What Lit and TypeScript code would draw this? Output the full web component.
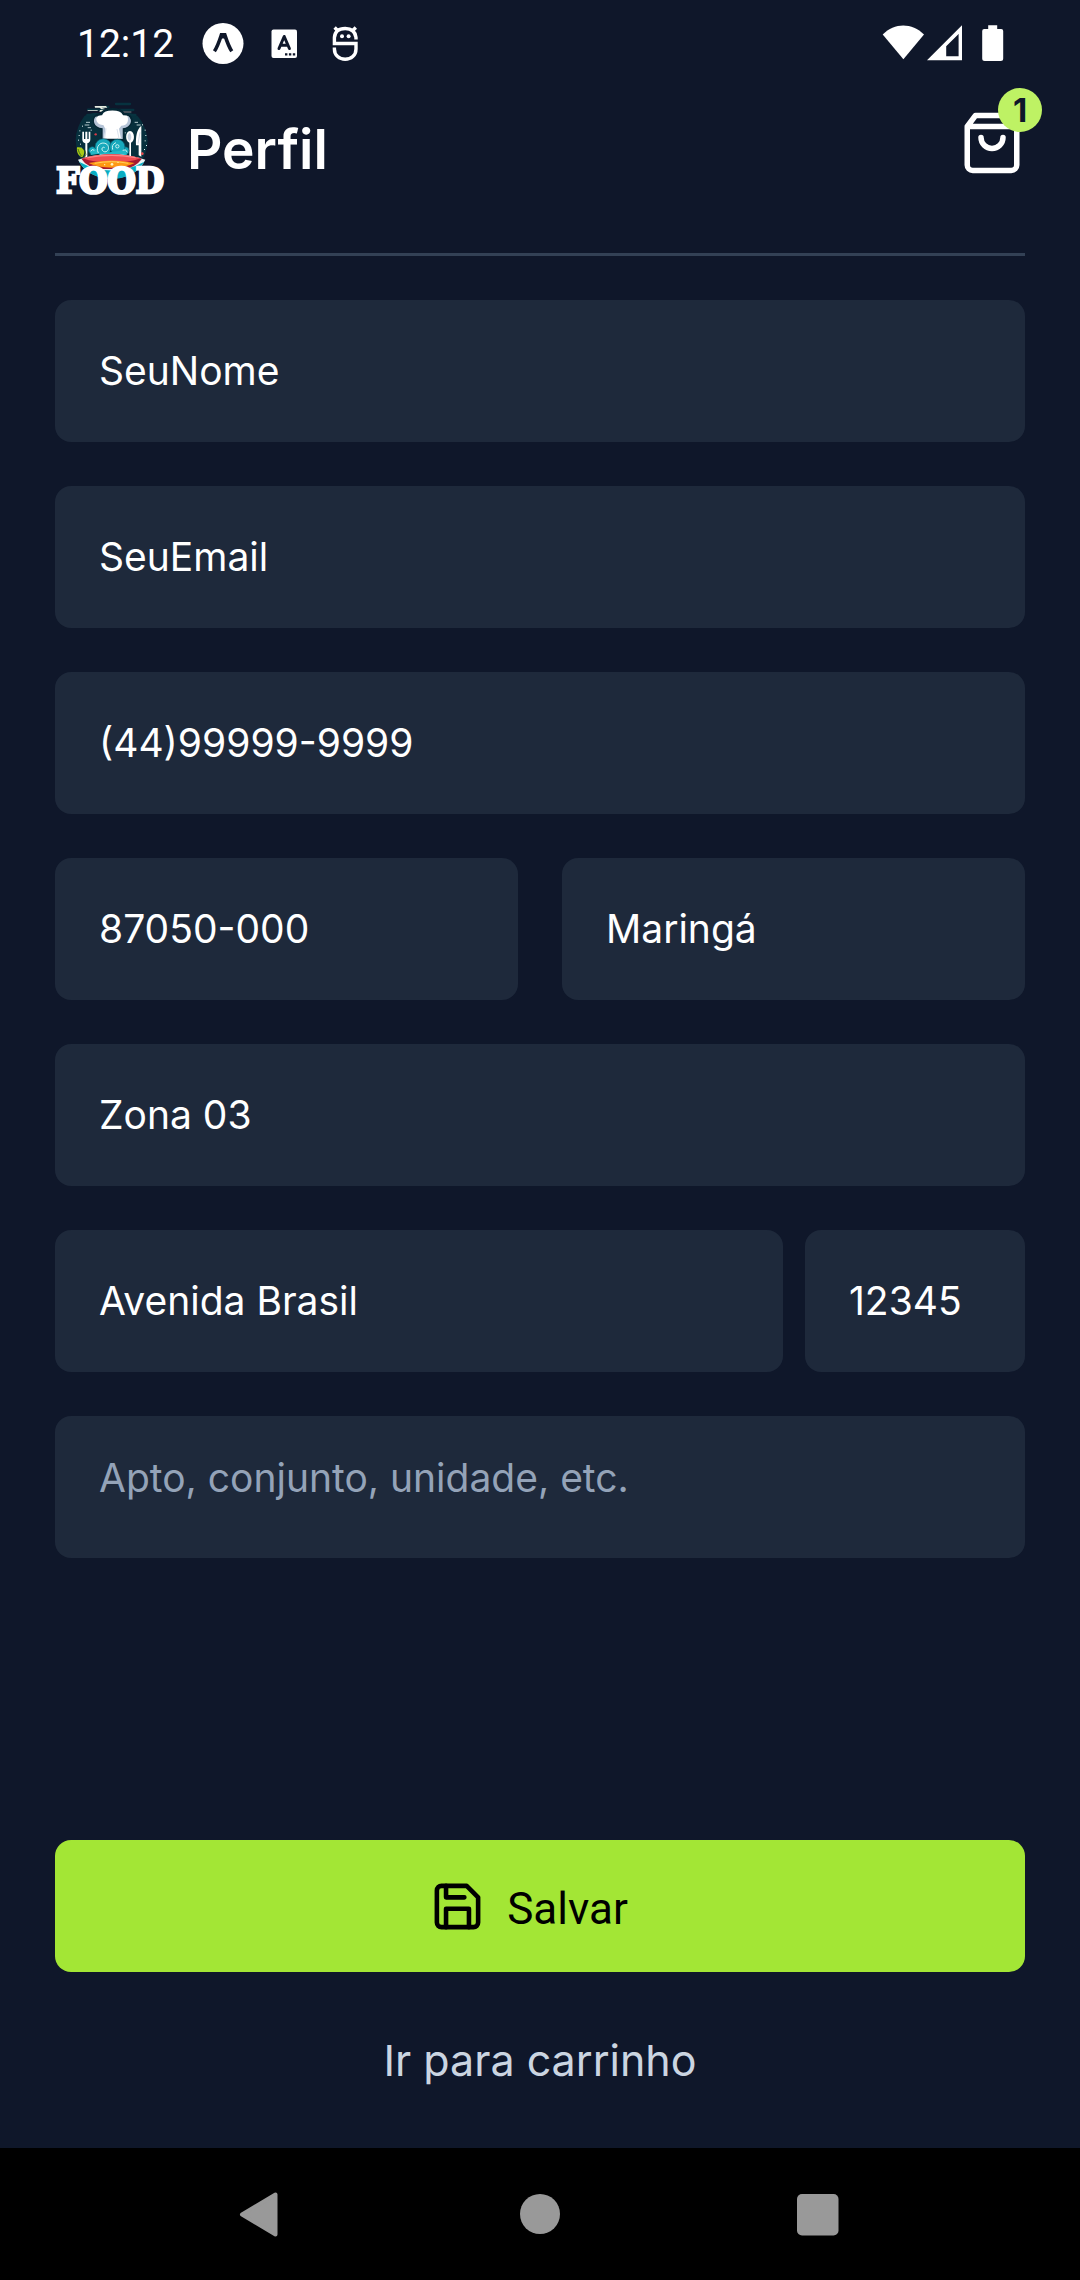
import { LitElement, html, css, svg } from "lit";
import { customElement } from "lit/decorators.js";

const base = css`
  * { box-sizing: border-box; }
  svg { display: block; }
`;

@customElement("status-bar")
class StatusBar extends LitElement {
  static styles = [base, css`
    :host { display: flex; align-items: center; justify-content: space-between; height: 88px; padding: 0 76px 0 77px; color: #fff; }
    .side { display: flex; align-items: center; }
    .time { font: 400 39px/44px Roboto, sans-serif; margin-right: 27px; }
    .apps { gap: 20px; }
  `];
  render() {
    return html`
      <div class="side apps">
        <div class="side">
          <span class="time">12:12</span>
          <svg width="44" height="44" viewBox="0 0 44 44" aria-hidden="true">
            <circle cx="22" cy="21.500" r="20.500" fill="#fff"/>
            <path d="M13.400 29.200C16.500 25 18.400 19 20.400 12.900H23.800C25.800 19 27.800 25 30.800 29.200" fill="none" stroke="#0f172a" stroke-width="3.600"/>
            <path d="M20.200 11.400h3.800l1 5h-5.800z" fill="#0f172a"/>
          </svg>
        </div>
        <svg width="38" height="44" viewBox="0 0 38 44" aria-hidden="true">
          <rect x="6.500" y="7.500" width="25.500" height="28.500" rx="2" fill="#fff"/>
          <path d="M14 26.500L19.200 14.500L24.400 26.500M15.800 23.300H22.600" fill="none" stroke="#0f172a" stroke-width="3" stroke-linecap="round" stroke-linejoin="round"/>
          <path d="M20 31.200h2.400v2.400H20zM23.900 31.200h2.400v2.400h-2.400zM27.800 31.200h2.400v2.400h-2.400z" fill="#0f172a"/>
        </svg>
        <svg width="44" height="44" viewBox="0 0 44 44" aria-hidden="true">
          <path d="M33 17.500V15.500C32 8 27 6.500 22.200 6.500S12 8 11.400 15.500V21.500H33V27C33 33.500 28 37.300 22.200 37.300S11.400 33.500 11.400 27V25.500" fill="none" stroke="#fff" stroke-width="3.400"/>
          <path d="M11.600 5.500l4 4M32.800 5.500l-4 4" stroke="#fff" stroke-width="3.400"/>
          <circle cx="19" cy="14.300" r="2" fill="#fff"/>
          <circle cx="25.600" cy="14.300" r="2" fill="#fff"/>
        </svg>
      </div>
      <svg width="124" height="44" viewBox="0 0 124 44" aria-hidden="true" fill="#fff">
        <path d="M2.700 12.600C14.500 0.500 32 0.500 44 12.600L23.400 37.300Z"/>
        <path fill-rule="evenodd" d="M47 38.300L82 3.200V38.300ZM66.200 34.200H78.600V12L66.200 24.300Z"/>
        <path d="M108.200 3.300h9v3.800h4a2 2 0 0 1 2 2v27.500a2.500 2.500 0 0 1-2.500 2.500h-16a2.500 2.500 0 0 1-2.500-2.500V9.100a2 2 0 0 1 2-2h4z"/>
      </svg>
    `;
  }
}

@customElement("food-logo")
class FoodLogo extends LitElement {
  static styles = [base, css`
    :host { display: block; }
    svg { overflow: visible; }
    .word { font: 700 108px "DejaVu Serif Condensed", "DejaVu Serif", serif; fill: #fff; stroke: #fff; stroke-width: 8px; stroke-linejoin: miter; }
  `];
  render() {
    const dots = [[88, 106], [96, 92], [86, 120], [84, 134], [90, 146], [276, 88], [284, 104], [286, 120], [284, 136], [288, 150], [92, 158], [282, 162], [122, 104], [224, 112], [228, 160]];
    return html`
      <svg width="110" height="95" viewBox="15 21 330 285" role="img" aria-label="Food">
        <path d="M104 62Q78 96 77 134Q78 190 112 220H260Q292 184 293 136Q288 90 262 62L240 54H130Z" fill="#07303d"/>
        <g fill="none" stroke="#07323f" stroke-width="7" stroke-linecap="round">
          <path d="M198 27H240M114 44H160M150 36H175M208 45H250M112 60H256"/>
        </g>
        <path d="M134 33h34l4 5h-18l14 5h-14l-5-5h-14zM113 46h30v2h-30zM218 50h26v2h-26zM150 45h10l4 5h-16z" fill="#e9eee3"/>
        <g fill="#e8f4f5">${dots.map(([x, y]) => svg`<rect x=${x} y=${y} width="3" height="3"/>`)}</g>
        <path d="M108 82h12M104 90h14M113 98h10M254 82h10M260 90h12" stroke="#d7e8ea" stroke-width="2.500" fill="none"/>

        <path d="M158 101C124 96 124 57 154 57C161 39 211 37 221 57C251 57 254 93 220 101V135H155Z" fill="#fff" stroke="#052633" stroke-width="7"/>
        <path d="M158 100C130 98 125 72 140 63C135 78 145 91 160 90L166 101L162 132H158ZM213 132L207 101L214 92C230 92 238 80 232 62C251 72 244 97 218 100V132Z" fill="#b5c4d7"/>
        <path d="M168 100L164 130M201 102L207 130" stroke="#dbe3ed" stroke-width="3"/>

        <path d="M97 110V133Q97 143 106 145V190H112V145Q121 142 121 133V110H116V132H112V110H106V132H102V110Z" fill="#fff"/>
        <path d="M240 108C225 110 225 138 238 143V184H243V143C256 138 255 110 240 108Z" fill="#fff"/>
        <path d="M239 113C231 117 231 133 239 138C246 133 245 118 239 113Z" fill="#c8d4e2"/>
        <path d="M274 92V185L266 181V151H258C257 125 260 103 274 92Z" fill="#fff"/>
        <path d="M270 112L264 146" stroke="#b5c4d7" stroke-width="2"/>
        <path d="M81 157C101 153 109 171 97 187C84 183 79 171 81 157Z" fill="#a9c916"/>
        <path d="M94 183C89 176 86 169 84 162M105 166Q112 180 101 188" stroke="#476d17" stroke-width="3" fill="none"/>
        <circle cx="137" cy="118" r="3.500" fill="#d83b46"/>
        <circle cx="277" cy="176" r="4" fill="#f15053"/>

        <g fill="#17a9bc" stroke="#075467" stroke-width="2">
          <circle cx="127" cy="166" r="11"/>
          <circle cx="225" cy="167" r="12"/>
          <circle cx="160" cy="156" r="25"/>
          <circle cx="202" cy="156" r="23"/>
        </g>
        <path d="M122 180V166Q132 155 142 166L150 180H230V174Q230 165 220 166" fill="#22b8c7"/>
        <g fill="none" stroke="#c8f3f2" stroke-width="3">
          <path d="M145 174C134 153 155 136 171 148C182 159 171 176 160 169C151 163 158 153 164 158"/>
          <path d="M122 169Q126 160 133 166M218 166Q228 160 232 172"/>
          <circle cx="202" cy="154" r="5"/>
          <path d="M188 164Q184 148 198 143"/>
        </g>

        <path d="M84 194Q185 160 286 194C270 228 238 249 185 250C132 249 101 228 84 194Z" fill="#eaf6f6"/>
        <path d="M87 200Q185 253 283 200Q252 250 185 252Q117 250 87 200Z" fill="#08adc3"/>
        <path d="M94 191Q185 164 276 191Q255 219 220 222H150Q110 216 94 191Z" fill="#a71931"/>
        <path d="M99 190Q185 166 271 190Q235 204 185 203Q132 203 99 190Z" fill="#ef4d52"/>
        <path d="M112 188Q185 174 257 188" stroke="#ff8585" stroke-width="4" fill="none"/>
        <path d="M116 204Q185 189 254 204Q227 218 185 218Q142 218 116 204Z" fill="#ff9812"/>
        <path d="M134 205Q185 195 235 205" stroke="#ffd058" stroke-width="3" fill="none"/>
        <g fill="#fff3c2"><circle cx="186" cy="208" r="4"/><circle cx="164" cy="209" r="2"/><circle cx="204" cy="202" r="2"/></g>
        <text class="word" x="180" y="295" text-anchor="middle">FOOD</text>
      </svg>
    `;
  }
}

@customElement("app-root")
class AppRoot extends LitElement {
  static styles = [base, css`
    :host {
      display: flex; flex-direction: column; min-height: 100vh;
      background: #0f172a; color: #fff;
      font-family: Inter, "Noto Sans", sans-serif;
    }
    button, input, textarea { font: inherit; color: inherit; border: 0; margin: 0; outline: 0; }
    button { cursor: pointer; }
    .content { flex: 1; display: flex; flex-direction: column; padding: 0 55px; }
    .header { display: flex; align-items: center; justify-content: space-between; gap: 22px; padding: 14px 0 56px; border-bottom: 3px solid #334155; }
    .brand { display: flex; align-items: center; gap: 22px; }
    .title { margin: 0; padding-bottom: 2px; font-size: 55px; line-height: 66px; font-weight: 600; }
    .cart { position: relative; padding: 0; background: none; align-self: flex-start; margin-top: 8px; }
    .badge {
      position: absolute; top: -22px; right: -17px; width: 44px; height: 44px; border-radius: 50%;
      background: #bef264; color: #0f172a; font-size: 33px; line-height: 44px; font-weight: 700; text-align: center;
    }
    .form { display: flex; flex-direction: column; gap: 44px; padding-top: 44px; }
    .halves { display: grid; grid-template-columns: 1fr 1fr; gap: 44px; }
    .street { display: grid; grid-template-columns: 1fr 220px; gap: 22px; }
    .field {
      display: block; width: 100%; min-width: 0; height: 142px; padding: 0 44px 2px;
      border-radius: 16px; background: #1e293b; color: #fff; font-size: 39px; line-height: 48px;
    }
    .area { padding: 38px 44px; resize: none; overflow: hidden; }
    .field::placeholder { color: #94a3b8; opacity: 1; }
    .actions { display: flex; flex-direction: column; align-items: stretch; gap: 44px; margin-top: auto; padding: 44px 0; }
    .save {
      display: flex; align-items: center; justify-content: center; height: 132px; border-radius: 16px;
      background: #a3e635; color: #000; font: 400 44px/56px Roboto, sans-serif;
    }
    .save-label { padding: 6px 22px 0; }
    .link { align-self: center; padding: 16px 22px; color: #cbd5e1; font-size: 43px; line-height: 56px; text-decoration: none; }
    .nav { display: flex; justify-content: center; gap: 146px; background: #000; }
    .key { display: grid; place-items: center; width: 132px; height: 132px; padding: 0; background: none; }
  `];
  render() {
    return html`
      <status-bar></status-bar>
      <div class="content">
        <header class="header">
          <div class="brand">
            <food-logo></food-logo>
            <h1 class="title">Perfil</h1>
          </div>
          <button class="cart" aria-label="Carrinho">
            <svg width="66" height="66" viewBox="0 0 24 24" fill="none" stroke="#fff" stroke-width="2" stroke-linecap="round" stroke-linejoin="round">
              <path d="M6 2L3 6v14a2 2 0 0 0 2 2h14a2 2 0 0 0 2-2V6l-3-4zM3 6h18M16 10a4 4 0 0 1-8 0"/>
            </svg>
            <span class="badge">1</span>
          </button>
        </header>
        <form class="form" id="profile" @submit=${(e: Event) => e.preventDefault()}>
          <input class="field" type="text" aria-label="Nome" value="SeuNome">
          <input class="field" type="text" aria-label="Email" value="SeuEmail">
          <input class="field" type="tel" aria-label="Telefone" value="(44)99999-9999">
          <div class="halves">
            <input class="field" type="text" aria-label="CEP" value="87050-000">
            <input class="field" type="text" aria-label="Cidade" value="Maringá">
          </div>
          <input class="field" type="text" aria-label="Bairro" value="Zona 03">
          <div class="street">
            <input class="field" type="text" aria-label="Rua" value="Avenida Brasil">
            <input class="field" type="text" aria-label="Número" value="12345">
          </div>
          <textarea class="field area" rows="1" aria-label="Complemento" placeholder="Apto, conjunto, unidade, etc."></textarea>
        </form>
        <div class="actions">
          <button class="save" type="submit" form="profile">
            <svg width="55" height="55" viewBox="0 0 24 24" fill="none" stroke="#000" stroke-width="2" stroke-linecap="round" stroke-linejoin="round" aria-hidden="true">
              <path d="M19 21H5a2 2 0 0 1-2-2V5a2 2 0 0 1 2-2h11l5 5v11a2 2 0 0 1-2 2z"/>
              <path d="M17 21v-8H7v8M7 3v5h8"/>
            </svg>
            <span class="save-label">Salvar</span>
          </button>
          <a class="link" href="#carrinho">Ir para carrinho</a>
        </div>
      </div>
      <nav class="nav" aria-label="Sistema">
        <button class="key" aria-label="Voltar">
          <svg width="48" height="48" viewBox="0 0 48 48"><path d="M37.500 4.500V44.500L4 24.500Z" fill="#999" stroke="#999" stroke-width="4" stroke-linejoin="round"/></svg>
        </button>
        <button class="key" aria-label="Início">
          <svg width="48" height="48" viewBox="0 0 48 48"><circle cx="24" cy="24" r="20" fill="#999"/></svg>
        </button>
        <button class="key" aria-label="Recentes">
          <svg width="48" height="48" viewBox="0 0 48 48"><rect x="3" y="4" width="41.500" height="41.500" rx="5" fill="#999"/></svg>
        </button>
      </nav>
    `;
  }
}
